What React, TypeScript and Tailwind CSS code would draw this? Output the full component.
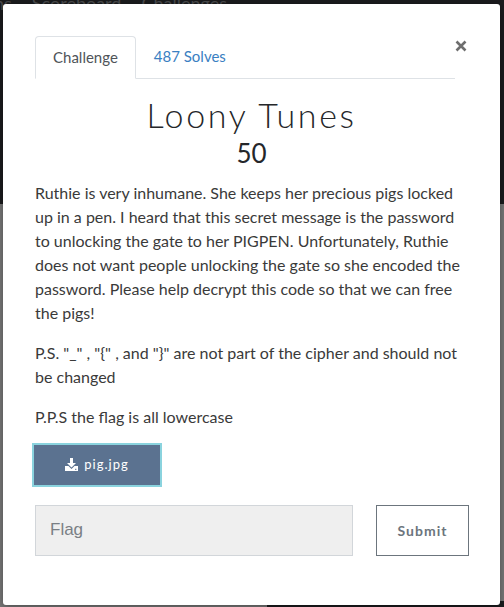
export default function App() {
  return (
    <div className="relative h-[607px] w-[504px] overflow-hidden bg-[#7a7a7a] font-['Lato',sans-serif]">
      {/* page behind the backdrop */}
      <div className="h-[214px] bg-[#1b1c1e] px-[-4px] text-[18px] text-[#4a4b4d]">
        <div className="-mt-[10px] -ml-[6px] flex gap-[20px]">
          <span>ns</span>
          <span>Scoreboard</span>
          <span>Challenges</span>
        </div>
      </div>
      <div className="absolute bottom-0 right-0 h-[6px] w-[237px] bg-[#1b1c1e]" />

      {/* modal */}
      <div className="absolute left-[3px] top-[4px] h-[601px] w-[497px] rounded-[3px] bg-white px-[32px] pt-[32px] shadow-[0_2px_8px_rgba(0,0,0,0.4)]">
        <div className="flex items-start justify-between">
          <div className="flex w-[420px] shrink-0 border-b border-[#dee2e6]">
            <div className="-mb-px rounded-t-[4px] border border-b-white border-[#dee2e6] px-[17px] py-[9px] text-[15px] text-[#4f5459]">
              Challenge
            </div>
            <div className="px-[18px] py-[9px] text-[15px] text-[#3a80c2]">487 Solves</div>
          </div>
          <svg className="mr-[1px] mt-[4px] h-[12px] w-[12px]" viewBox="0 0 12 12">
            <path d="M1.5 1.5 L10.5 10.5 M10.5 1.5 L1.5 10.5" stroke="#6e6e6e" strokeWidth="2.6" />
          </svg>
        </div>

        <div className="mt-[16px] text-center text-[34px] font-light leading-[40px] tracking-[2.6px] text-[#25272a]">
          Loony Tunes
        </div>
        <div className="mt-[2px] text-center text-[26px] leading-[32px] text-[#25272a]">50</div>

        <div className="mt-[12px] w-[433px] text-[16px] leading-[24px] text-[#3a3a3a]">
          <p className="mb-[16px]">
            Ruthie is very inhumane. She keeps her precious pigs locked up in a pen. I heard that this secret
            message is the password to unlocking the gate to her PIGPEN. Unfortunately, Ruthie does not want
            people unlocking the gate so she encoded the password. Please help decrypt this code so that we can
            free the pigs!
          </p>
          <p className="mb-[16px]">
            P.S. "_" , "{"{"}" , and "{"}"}" are not part of the cipher and should not be changed
          </p>
          <p>P.P.S the flag is all lowercase</p>
        </div>

        <div className="mt-[14px] -ml-[3px] w-[130px] border-2 border-[#8ad3de]">
          <div className="flex h-[40px] items-center justify-center gap-[6px] bg-[#5b7290] text-[13px] tracking-[1px] text-white">
            <svg className="h-[13px] w-[13px]" viewBox="0 0 13 13">
              <path d="M5 0 H8 V5 H11 L6.5 9.5 L2 5 H5 Z" fill="white" />
              <path d="M0 8 H3.5 L6.5 11 L9.5 8 H13 V13 H0 Z" fill="white" />
              <rect x="10" y="10.8" width="1.4" height="1" fill="#5b7290" />
            </svg>
            pig.jpg
          </div>
        </div>

        <div className="mt-[18px] flex w-[434px] items-start justify-between">
          <div className="flex h-[51px] w-[318px] items-center border border-[#d2d6da] bg-[#efefef] px-[14px] font-['Liberation_Sans',sans-serif] text-[17px] text-[#7a7f85]">
            Flag
          </div>
          <div className="flex h-[51px] w-[93px] items-center justify-center border border-[#6c757d] text-[14px] font-bold tracking-[1px] text-[#6c757d]">
            Submit
          </div>
        </div>
      </div>
    </div>
  );
}
